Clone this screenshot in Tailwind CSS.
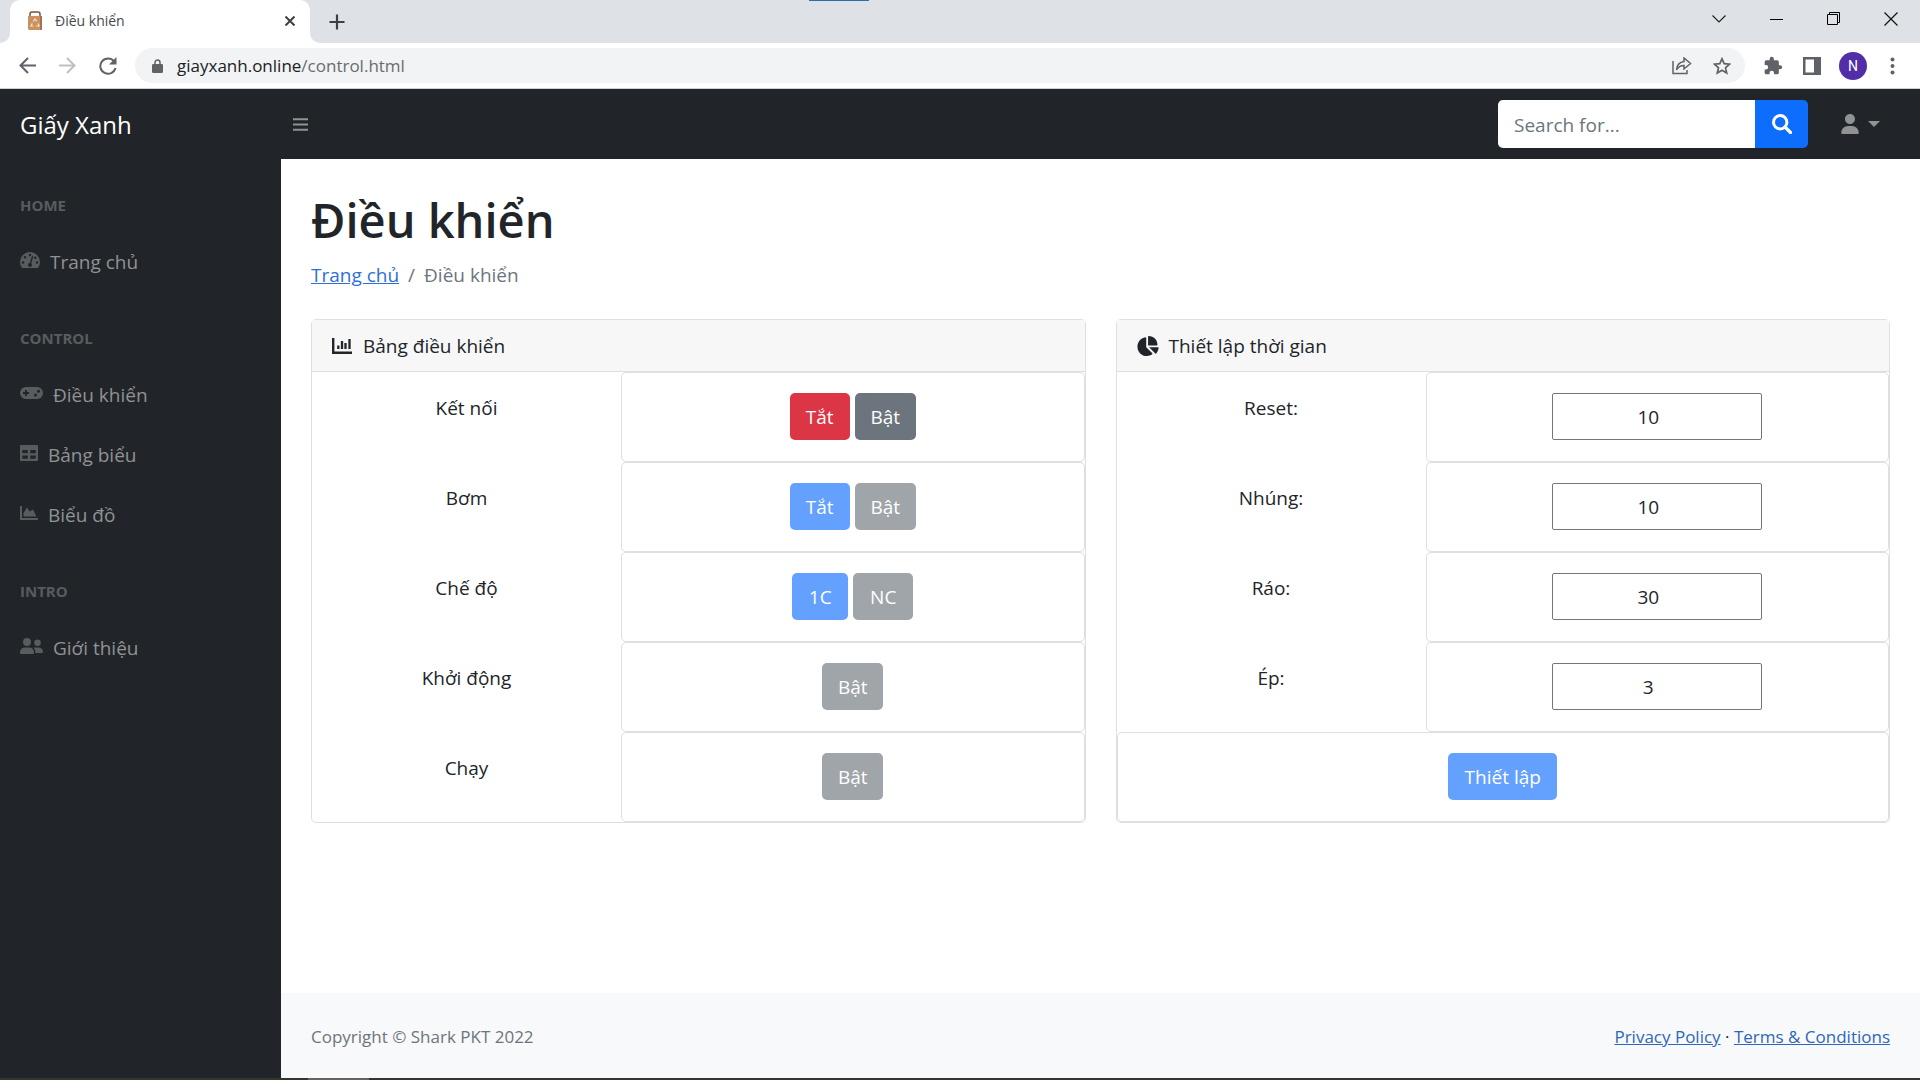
<!DOCTYPE html>
<html lang="vi">
<head>
<meta charset="utf-8">
<title>Điều khiển</title>
<script src="https://cdn.jsdelivr.net/npm/@tailwindcss/browser@4"></script>
</head>
<body class="flex min-h-screen flex-col bg-white font-['Open_Sans',sans-serif] text-[19px] leading-[30px] text-[#212529]">

<!-- Browser tab strip -->
<header>
  <div class="relative flex h-[43px] items-stretch bg-[#dee1e6] pl-[10px]">
    <div class="absolute top-0 left-[809px] h-px w-[60px] bg-[#2f6ea5]"></div>
    <div class="relative flex w-[300px] items-center rounded-t-[10px] bg-white pr-3 pb-[2px] pl-[17px]">
      <div class="absolute bottom-0 -left-[10px] size-[10px] bg-white"><div class="size-full rounded-br-[10px] bg-[#dee1e6]"></div></div>
      <div class="absolute -right-[10px] bottom-0 size-[10px] bg-white"><div class="size-full rounded-bl-[10px] bg-[#dee1e6]"></div></div>
      <svg class="h-5 w-4" viewBox="0 0 16 20"><path d="M3 6V3q0-2 2-2h6q2 0 2 2v3" fill="none" stroke="#7d5136" stroke-width="1.5"/><path d="M1 5h14v12.500q0 1.500-1.500 1.500h-11Q1 19 1 17.500z" fill="#ca9263"/><path d="M13 5h2v12.500q0 1.500-1.500 1.500H13z" fill="#a97148"/><path d="M6.200 10.500 8 8l1.800 2.500M11 12.500l1.200 2.500H9M6.500 15H4l1.300-2.700" fill="none" stroke="#f5e3cd" stroke-width="1.200"/></svg>
      <span class="ml-3 grow text-[14px] leading-5 text-[#45494d]">Điều khiển</span>
      <button aria-label="Close tab" class="flex size-4 items-center justify-center"><svg class="size-[10px]" viewBox="0 0 10 10"><path d="M.5.5l9 9M9.500.5l-9 9" stroke="#3c4043" stroke-width="2"/></svg></button>
    </div>
    <button aria-label="New tab" class="ml-[19px] flex w-4 items-center"><svg class="size-4" viewBox="0 0 16 16"><path d="M8 .5v15M.5 8h15" stroke="#3c4043" stroke-width="2.200"/></svg></button>
    <div class="ml-auto flex items-center gap-[44px] pr-[22px] pb-[6px]">
      <button aria-label="Search tabs"><svg class="block h-[8px] w-[14px]" viewBox="0 0 14 8"><path d="M.5.5 7 7 13.500.5" fill="none" stroke="#222" stroke-width="1.200"/></svg></button>
      <button aria-label="Minimize"><svg class="block h-[14px] w-[13px]" viewBox="0 0 13 14"><path d="M0 7.500h13" stroke="#000"/></svg></button>
      <button aria-label="Restore"><svg class="block size-[13px]" viewBox="0 0 13 13"><path d="M.5 2.500h10v10H.5zM2.500 2.500v-2h10v10h-2" fill="none" stroke="#000"/></svg></button>
      <button aria-label="Close"><svg class="block size-[14px]" viewBox="0 0 14 14"><path d="M.5.5l13 13M13.500.5l-13 13" stroke="#111" stroke-width="1.200"/></svg></button>
    </div>
  </div>

  <!-- Browser toolbar -->
  <div class="flex h-[46px] items-center border-b border-[#cfd2d6] bg-white pr-[25px] pl-[19px]">
    <button aria-label="Back"><svg class="block size-[17px]" viewBox="0 0 17 17"><path d="M9 1 1.500 8.500 9 16M2 8.500h15" fill="none" stroke="#5f6368" stroke-width="2"/></svg></button>
    <button aria-label="Forward" class="ml-[23px]"><svg class="block size-[17px]" viewBox="0 0 17 17"><path d="M8 1l7.500 7.500L8 16M15 8.500H0" fill="none" stroke="#bdc1c6" stroke-width="2"/></svg></button>
    <button aria-label="Reload" class="ml-[23px]"><svg class="block size-[18px]" viewBox="0 0 18 18"><path d="M15 4.200A7.700 7.700 0 1 0 16.500 11" fill="none" stroke="#5f6368" stroke-width="2"/><path d="M17.500 0v7.500H10z" fill="#5f6368"/></svg></button>
    <div class="ml-[18px] flex h-[35px] grow items-center rounded-full bg-[#f1f3f4] pr-[14px] pl-[17px]">
      <svg class="h-[14px] w-[11px]" viewBox="0 0 11 14"><path d="M3 6V3.500a2.500 2.500 0 0 1 5 0V6" fill="none" stroke="#5f6368" stroke-width="1.500"/><rect y="5" width="11" height="9" rx="1.200" fill="#5f6368"/></svg>
      <span class="ml-[14px] grow text-[17px] leading-6 text-[#202124]">giayxanh.online<span class="text-[#686c71]">/control.html</span></span>
      <button aria-label="Share"><svg class="block h-[18px] w-[20px]" viewBox="0 0 20 18"><path d="M1 4v12.500h14V13M12 4.500V1l6.500 5.500L12 12V8.500Q7 8.500 4.500 13 5 5.500 12 4.500z" fill="none" stroke="#5f6368" stroke-width="1.500"/></svg></button>
      <button aria-label="Bookmark" class="ml-[21px]"><svg class="block size-[18px]" viewBox="0 0 18 18"><path d="M9 1.800l2.200 4.900 5.300.5-4 3.600 1.200 5.300L9 13.300l-4.700 2.800 1.200-5.300-4-3.600 5.300-.5z" fill="none" stroke="#5f6368" stroke-width="1.700"/></svg></button>
    </div>
    <button aria-label="Extensions" class="ml-[18px]"><svg class="block size-[20px]" viewBox="0 0 24 24"><path fill="#5f6368" d="M20.500 11H19V7a2 2 0 0 0-2-2h-4V3.500a2.500 2.500 0 0 0-5 0V5H4a2 2 0 0 0-2 2v3.800h1.500a2.700 2.700 0 0 1 0 5.400H2V20a2 2 0 0 0 2 2h3.800v-1.500a2.700 2.700 0 0 1 5.400 0V22H17a2 2 0 0 0 2-2v-4h1.500a2.500 2.500 0 0 0 0-5z"/></svg></button>
    <button aria-label="Side panel" class="ml-[20px]"><svg class="block size-[18px]" viewBox="0 0 18 18"><path fill="#5f6368" fill-rule="evenodd" d="M0 0h18v18H0zM2.500 2.500v13H11v-13z"/></svg></button>
    <button aria-label="Profile" class="ml-[18px] size-[28px] rounded-full bg-[#512da8] text-center font-[Roboto,sans-serif] text-[14px] leading-[28px] text-white">N</button>
    <button aria-label="Menu" class="ml-[23px]"><svg class="block h-[18px] w-[5px]" viewBox="0 0 5 18"><g fill="#5f6368"><circle cx="2.500" cy="2.500" r="2"/><circle cx="2.500" cy="9" r="2"/><circle cx="2.500" cy="15.500" r="2"/></g></svg></button>
  </div>
</header>

<!-- Site navigation bar -->
<nav class="flex h-[70px] items-center bg-[#212529]">
  <a href="#" class="w-[281px] pt-[2px] pl-[20px] text-[24px] text-white">Giấy Xanh</a>
  <button aria-label="Toggle sidebar" class="ml-[12px]"><svg class="block h-[13px] w-[15px]" viewBox="0 0 15 13"><path d="M0 1.200h15M0 6.500h15M0 11.800h15" stroke="#909294" stroke-width="2"/></svg></button>
  <form class="ml-auto flex h-[48px]">
    <input type="text" aria-label="Search" placeholder="Search for..." class="w-[257px] rounded-l-[5px] bg-white px-4 pt-[2px] placeholder:text-[#6c757d]">
    <button type="button" aria-label="Submit search" class="flex w-[53px] items-center justify-center rounded-r-[5px] bg-[#0d6efd]"><svg class="size-5" viewBox="0 0 20 20"><circle cx="8.200" cy="8.200" r="6.700" fill="none" stroke="#fff" stroke-width="3"/><path d="M13 13l5.500 5.500" stroke="#fff" stroke-width="3.200" stroke-linecap="round"/></svg></button>
  </form>
  <button aria-label="Account" class="mr-[40px] ml-[33px] flex items-center gap-[9px]">
    <svg class="h-[20px] w-[18px]" viewBox="0 0 448 512"><path fill="#909294" d="M224 256c70.700 0 128-57.300 128-128S294.700 0 224 0 96 57.300 96 128s57.300 128 128 128zM274.700 304H173.300C77.600 304 0 381.600 0 477.300c0 19.200 15.500 34.700 34.700 34.700h378.700c19.100 0 34.600-15.500 34.600-34.700C448 381.600 370.400 304 274.700 304z"/></svg>
    <svg class="h-[6px] w-[12px]" viewBox="0 0 12 6"><path d="M0 0h12L6 6z" fill="#909294"/></svg>
  </button>
</nav>

<div class="flex grow">
  <!-- Sidebar -->
  <aside class="w-[281px] shrink-0 bg-[#212529] text-[#909294]">
    <h2 class="px-5 pt-[35px] pb-[15px] text-[15px] leading-[23px] font-bold text-[#595c5f]">HOME</h2>
    <a href="#" class="flex h-[60px] items-center gap-[10px] px-5">
      <svg class="mb-1 h-4 w-5" viewBox="0 0 20 16"><path fill="#595c5f" d="M2 16Q0 13.500 0 10a10 10 0 0 1 20 0q0 3.500-2 6z"/><g fill="#212529"><circle cx="10" cy="3" r="1.200"/><circle cx="5" cy="5.300" r="1.200"/><circle cx="3" cy="10.500" r="1.200"/><circle cx="17" cy="10.500" r="1.200"/><circle cx="15.300" cy="5.800" r="1.200"/><circle cx="10" cy="13" r="2"/></g><path d="M10 13l2.700-9" stroke="#212529" stroke-width="1.400"/></svg>
      Trang chủ</a>
    <h2 class="px-5 pt-[35px] pb-[15px] text-[15px] leading-[23px] font-bold text-[#595c5f]">CONTROL</h2>
    <a href="#" class="flex h-[60px] items-center gap-[10px] px-5">
      <svg class="mb-1 h-3 w-[23px]" viewBox="0 0 23 12"><rect width="23" height="12" rx="6" fill="#595c5f"/><path d="M6 3v6M3 6h6" stroke="#212529" stroke-width="1.800"/><circle cx="15.500" cy="8" r="1.500" fill="#212529"/><circle cx="18.500" cy="4.300" r="1.500" fill="#212529"/></svg>
      Điều khiển</a>
    <a href="#" class="flex h-[60px] items-center gap-[10px] px-5">
      <svg class="mb-1 h-4 w-[18px]" viewBox="0 0 18 16"><path fill="#595c5f" fill-rule="evenodd" d="M1 0h16q1 0 1 1v14q0 1-1 1H1q-1 0-1-1V1q0-1 1-1zM2.300 5v3.200h5.500V5zM10.200 5v3.200h5.500V5zM2.300 10.500v3.200h5.500v-3.200zM10.200 10.500v3.200h5.500v-3.200z"/></svg>
      Bảng biểu</a>
    <a href="#" class="flex h-[60px] items-center gap-[10px] px-5">
      <svg class="mb-1 h-[14px] w-[18px]" viewBox="0 0 18 14"><path d="M1 0v13h17" fill="none" stroke="#595c5f" stroke-width="2"/><path d="M3.500 10.500V7L7 1.500l2.800 4L13 3.500l3.500 7z" fill="#595c5f"/></svg>
      Biểu đồ</a>
    <h2 class="px-5 pt-[35px] pb-[15px] text-[15px] leading-[23px] font-bold text-[#595c5f]">INTRO</h2>
    <a href="#" class="flex h-[60px] items-center gap-[10px] px-5">
      <svg class="mb-1 h-4 w-[23px]" viewBox="0 0 23 16"><g fill="#595c5f"><circle cx="7" cy="4" r="4"/><path d="M0 15q0-5.500 5-5.500h4q5 0 5 5.500 0 1-1 1H1q-1 0-1-1z"/><circle cx="17.500" cy="4.700" r="3.300"/><path d="M13.500 9.500h4.500q5 0 5 4.500 0 1-1 1h-6.500q0-3.500-2-5.500z"/></g></svg>
      Giới thiệu</a>
  </aside>

  <div class="flex min-w-0 grow flex-col">
    <main class="grow px-[30px] pt-[31px]">
      <h1 class="mb-[10px] text-[47px] leading-[60px] font-semibold">Điều khiển</h1>
      <ol class="mb-[29px] flex gap-[9px] text-[#6c757d]">
        <li><a href="#" class="text-[#2f6fd6] underline">Trang chủ</a></li>
        <li aria-hidden="true">/</li>
        <li>Điều khiển</li>
      </ol>

      <div class="grid grid-cols-2 gap-[30px]">
        <!-- Control panel -->
        <section class="rounded-[5px] border border-[#dfdfdf]">
          <h2 class="flex h-[52px] items-center gap-[10px] border-b border-[#dfdfdf] bg-[#f7f7f7] px-5">
            <svg class="mr-px h-4 w-5" viewBox="0 0 20 16"><path d="M1.200 0v14.700H20" fill="none" stroke="#212529" stroke-width="2.400"/><path d="M6.300 7.500V11M10 3v8M13.500 5v6M17.500 1v10" stroke="#212529" stroke-width="2.300"/></svg>
            Bảng điều khiển</h2>
          <div class="grid auto-rows-[90px] grid-cols-[2fr_3fr] text-center">
            <div class="pt-[21px]">Kết nối</div>
            <div class="flex items-center justify-center gap-[5px] rounded-[5px] border border-[#dfdfdf] pb-[2px]">
              <button class="h-[47px] w-[60px] rounded-[5px] bg-[#dc3545] pt-[2px] text-white">Tắt</button>
              <button class="h-[47px] w-[61px] rounded-[5px] bg-[#6c757d] pt-[2px] text-white">Bật</button>
            </div>
            <div class="pt-[21px]">Bơm</div>
            <div class="flex items-center justify-center gap-[5px] rounded-[5px] border border-[#dfdfdf] pb-[2px]">
              <button disabled class="h-[47px] w-[60px] rounded-[5px] bg-[#64a0fe] pt-[2px] text-white">Tắt</button>
              <button disabled class="h-[47px] w-[61px] rounded-[5px] bg-[#a0a5aa] pt-[2px] text-white">Bật</button>
            </div>
            <div class="pt-[21px]">Chế độ</div>
            <div class="flex items-center justify-center gap-[5px] rounded-[5px] border border-[#dfdfdf] pb-[2px]">
              <button disabled class="h-[47px] w-[56px] rounded-[5px] bg-[#64a0fe] pt-[2px] text-white">1C</button>
              <button disabled class="h-[47px] w-[60px] rounded-[5px] bg-[#a0a5aa] pt-[2px] text-white">NC</button>
            </div>
            <div class="pt-[21px]">Khởi động</div>
            <div class="flex items-center justify-center rounded-[5px] border border-[#dfdfdf] pb-[2px]">
              <button disabled class="h-[47px] w-[61px] rounded-[5px] bg-[#a0a5aa] pt-[2px] text-white">Bật</button>
            </div>
            <div class="pt-[21px]">Chạy</div>
            <div class="flex items-center justify-center rounded-[5px] border border-[#dfdfdf] pb-[2px]">
              <button disabled class="h-[47px] w-[61px] rounded-[5px] bg-[#a0a5aa] pt-[2px] text-white">Bật</button>
            </div>
          </div>
        </section>

        <!-- Timing settings -->
        <section class="rounded-[5px] border border-[#dfdfdf]">
          <h2 class="flex h-[52px] items-center gap-[10px] border-b border-[#dfdfdf] bg-[#f7f7f7] px-5">
            <svg class="h-5 w-[22px]" viewBox="24 0 556 512"><path fill="#212529" d="M304 16.600C304 7.600 310.100 0 320 0c123.700 0 224 100.300 224 224 0 9-7.600 16-16.600 16H304zM32 272C32 150.700 122.100 50.300 238.100 34.300 248.200 33 256 40.400 256 49.100V288l156.500 156.500c6.700 6.700 6.200 17.700-1.500 23.200C371.800 495.600 323.800 512 272 512 139.500 512 32 404.600 32 272zM558.400 288c9 0 16.400 7.800 15.100 17.900-8.400 54.200-29.600 104.400-60.300 140.200-5.800 7.600-17.400 8.100-24.100 1L330.600 288z"/></svg>
            Thiết lập thời gian</h2>
          <form class="grid auto-rows-[90px] grid-cols-[2fr_3fr] text-center">
            <label for="reset" class="pt-[21px]">Reset:</label>
            <div class="flex items-center justify-center rounded-[5px] border border-[#dfdfdf] pb-[2px]">
              <input id="reset" type="number" value="10" class="h-[47px] w-[210px] rounded-[2px] border border-[#767676] pt-[2px] pr-[5px] pl-[2px] text-center">
            </div>
            <label for="dip" class="pt-[21px]">Nhúng:</label>
            <div class="flex items-center justify-center rounded-[5px] border border-[#dfdfdf] pb-[2px]">
              <input id="dip" type="number" value="10" class="h-[47px] w-[210px] rounded-[2px] border border-[#767676] pt-[2px] pr-[5px] pl-[2px] text-center">
            </div>
            <label for="drain" class="pt-[21px]">Ráo:</label>
            <div class="flex items-center justify-center rounded-[5px] border border-[#dfdfdf] pb-[2px]">
              <input id="drain" type="number" value="30" class="h-[47px] w-[210px] rounded-[2px] border border-[#767676] pt-[2px] pr-[5px] pl-[2px] text-center">
            </div>
            <label for="press" class="pt-[21px]">Ép:</label>
            <div class="flex items-center justify-center rounded-[5px] border border-[#dfdfdf] pb-[2px]">
              <input id="press" type="number" value="3" class="h-[47px] w-[210px] rounded-[2px] border border-[#767676] pt-[2px] pr-[5px] pl-[2px] text-center">
            </div>
            <div class="col-span-2 flex items-center justify-center rounded-[5px] border border-[#dfdfdf] pb-[2px]">
              <button type="button" disabled class="h-[47px] w-[109px] rounded-[5px] bg-[#64a0fe] pt-[2px] text-white">Thiết lập</button>
            </div>
          </form>
        </section>
      </div>
    </main>

    <footer class="flex h-[85px] items-center justify-between bg-[#f8f9fa] px-[30px] pt-[3px] text-[17px] leading-[26px] text-[#6c757d]">
      <div>Copyright © Shark PKT 2022</div>
      <div class="text-[#212529]"><a href="#" class="text-[#2f66b8] underline">Privacy Policy</a> · <a href="#" class="text-[#2f66b8] underline">Terms &amp; Conditions</a></div>
    </footer>
  </div>
</div>
<div class="h-[2px] bg-[#33352f] pl-[308px]"><div class="h-full w-[61px] bg-[#62645f]"></div></div>
</body>
</html>
